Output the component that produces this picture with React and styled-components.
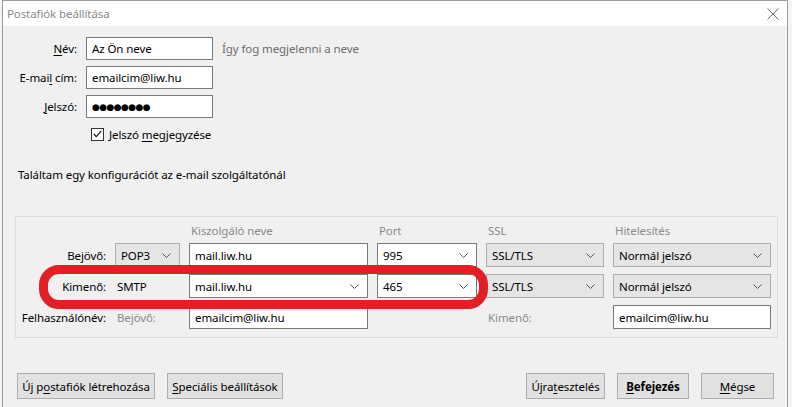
import React from "react";
import styled, { createGlobalStyle } from "styled-components";

const GlobalStyle = createGlobalStyle`
  html, body {
    margin: 0;
    padding: 0;
    background: #f4f4f4;
  }
  body {
    font-family: "Noto Sans", "Open Sans", sans-serif;
    font-size: 11.5px;
    letter-spacing: -0.1px;
    color: #000;
  }
  u { text-decoration-thickness: 1px; text-underline-offset: 2px; }
`;

const Window = styled.div`
  margin-left: 2px;
  width: 786px;
  height: 407px;
  box-sizing: border-box;
  border: 1px solid #9c9c9c;
  border-bottom: none;
  background: #f0f0f0;
  display: flex;
  flex-direction: column;
`;

const TitleBar = styled.div`
  height: 25px;
  flex-shrink: 0;
  background: #fff;
  display: flex;
  align-items: center;
  justify-content: space-between;
  padding: 0 8px 0 4px;
  color: #8a8a8a;
`;

const Body = styled.div`
  flex: 1;
  padding-top: 11px;
  display: flex;
  flex-direction: column;
`;

const FormGrid = styled.div`
  display: grid;
  grid-template-columns: 74px 127px auto;
  column-gap: 9px;
  row-gap: 6px;
  align-items: center;
`;

const Label = styled.label`
  text-align: right;
  white-space: nowrap;
  color: ${(p) => (p.$muted ? "#8a8a8a" : "#000")};
`;

const TextBox = styled.div`
  box-sizing: border-box;
  height: ${(p) => p.$h || 24}px;
  background: #fff;
  border: 1px solid #7a7a7a;
  display: flex;
  align-items: center;
  padding: 0 5px;
  white-space: nowrap;
  overflow: hidden;
`;

const Dots = styled.span`
  font-size: 9px;
  letter-spacing: -0.6px;
  font-family: "DejaVu Sans", sans-serif;
`;

const Hint = styled.span`
  color: #6d6d6d;
  white-space: nowrap;
`;

const CheckRow = styled.label`
  grid-column: 2 / 4;
  display: flex;
  align-items: center;
  gap: 5px;
  padding-left: 5px;
  height: 20px;
`;

const CheckBox = styled.span`
  box-sizing: border-box;
  width: 13px;
  height: 13px;
  border: 1px solid #333;
  background: #fff;
  display: inline-flex;
  align-items: center;
  justify-content: center;
`;

const Found = styled.div`
  margin: 23px 0 0 15px;
  line-height: 16px;
`;

const Group = styled.div`
  margin: 33px 9px 0 12px;
  border: 1px solid #dcdcdc;
  position: relative;
  display: grid;
  grid-template-columns: 90px 65px 179px 100px 118px 158px;
  grid-template-rows: 19px 24px 24px 24px;
  column-gap: 9px;
  row-gap: 7px;
  padding-bottom: 8px;
  align-items: center;
`;

const ColHead = styled.div`
  color: #8a8a8a;
  padding-top: 7px;
  padding-left: 2px;
  grid-column: ${(p) => p.$col};
`;

const Select = styled.div`
  box-sizing: border-box;
  height: 24px;
  display: flex;
  align-items: center;
  justify-content: space-between;
  padding: 0 8px 0 5px;
  white-space: nowrap;
  background: ${(p) => (p.$editable ? "#fff" : "#e5e5e5")};
  border: 1px solid ${(p) => (p.$editable ? "#7a7a7a" : "#adadad")};
`;

const Plain = styled.span`
  padding-left: 2px;
  color: ${(p) => (p.$muted ? "#8a8a8a" : "#000")};
`;

const Highlight = styled.div`
  position: absolute;
  left: 23px;
  top: 48px;
  width: 449px;
  height: 44px;
  box-sizing: border-box;
  border: 9px solid #e31e25;
  border-radius: 20px;
  pointer-events: none;
`;

const ButtonBar = styled.div`
  margin-top: 35px;
  padding: 0 13px 0 14px;
  display: flex;
  justify-content: space-between;
`;

const ButtonGroup = styled.div`
  display: flex;
  gap: ${(p) => p.$gap || 12}px;
`;

const Button = styled.button`
  box-sizing: border-box;
  height: 26px;
  width: ${(p) => p.$w}px;
  padding: 0;
  background: #e1e1e1;
  border: 1px solid #adadad;
  font-family: inherit;
  font-size: inherit;
  letter-spacing: inherit;
  font-weight: ${(p) => (p.$bold ? 700 : 400)};
  color: #000;
  white-space: nowrap;
`;

const Chevron = () => (
  <svg width="9" height="5" viewBox="0 0 9 5">
    <polyline points="0.5,0.5 4.5,4.5 8.5,0.5" fill="none" stroke="#555" strokeWidth="1" />
  </svg>
);

const CloseIcon = () => (
  <svg width="12" height="12" viewBox="0 0 12 12">
    <path d="M0.5 0.5 L11.5 11.5 M11.5 0.5 L0.5 11.5" stroke="#6f6f6f" strokeWidth="1" />
  </svg>
);

const CheckMark = () => (
  <svg width="9" height="8" viewBox="0 0 9 8">
    <polyline points="0.8,4 3.3,6.6 8.2,1" fill="none" stroke="#222" strokeWidth="1.2" />
  </svg>
);

export default function App() {
  return (
    <>
      <GlobalStyle />
      <Window>
        <TitleBar>
          <span>Postafiók beállítása</span>
          <CloseIcon />
        </TitleBar>
        <Body>
          <FormGrid>
            <Label><u>N</u>év:</Label>
            <TextBox $h={23}>Az Ön neve</TextBox>
            <Hint>Így fog megjelenni a neve</Hint>

            <Label>E-mai<u>l</u> cím:</Label>
            <TextBox $h={23}>emailcim@liw.hu</TextBox>
            <span />

            <Label><u>J</u>elszó:</Label>
            <TextBox $h={23}><Dots>●●●●●●●●</Dots></TextBox>
            <span />

            <span />
            <CheckRow>
              <CheckBox><CheckMark /></CheckBox>
              <span>Jelszó <u>m</u>egjegyzése</span>
            </CheckRow>
          </FormGrid>

          <Found>Találtam egy konfigurációt az e-mail szolgáltatónál</Found>

          <Group>
            <ColHead $col={3}>Kiszolgáló neve</ColHead>
            <ColHead $col={4}>Port</ColHead>
            <ColHead $col={5}>SSL</ColHead>
            <ColHead $col={6}>Hitelesítés</ColHead>

            <Label>Bejövő:</Label>
            <Select><span>POP3</span><Chevron /></Select>
            <TextBox>mail.liw.hu</TextBox>
            <Select $editable><span>995</span><Chevron /></Select>
            <Select><span>SSL/TLS</span><Chevron /></Select>
            <Select><span>Normál jelszó</span><Chevron /></Select>

            <Label>Kimenő:</Label>
            <Plain>SMTP</Plain>
            <Select $editable><span>mail.liw.hu</span><Chevron /></Select>
            <Select $editable><span>465</span><Chevron /></Select>
            <Select><span>SSL/TLS</span><Chevron /></Select>
            <Select><span>Normál jelszó</span><Chevron /></Select>

            <Label>Felhasználónév:</Label>
            <Plain $muted>Bejövő:</Plain>
            <TextBox>emailcim@liw.hu</TextBox>
            <span />
            <Plain $muted>Kimenő:</Plain>
            <TextBox>emailcim@liw.hu</TextBox>

            <Highlight />
          </Group>

          <ButtonBar>
            <ButtonGroup $gap={12}>
              <Button $w={138}>Új p<u>o</u>stafiók létrehozása</Button>
              <Button $w={116}><u>S</u>peciális beállítások</Button>
            </ButtonGroup>
            <ButtonGroup $gap={12}>
              <Button $w={79}>Újra<u>t</u>esztelés</Button>
              <Button $w={72} $bold><u>B</u>efejezés</Button>
              <Button $w={73}><u>M</u>égse</Button>
            </ButtonGroup>
          </ButtonBar>
        </Body>
      </Window>
    </>
  );
}
